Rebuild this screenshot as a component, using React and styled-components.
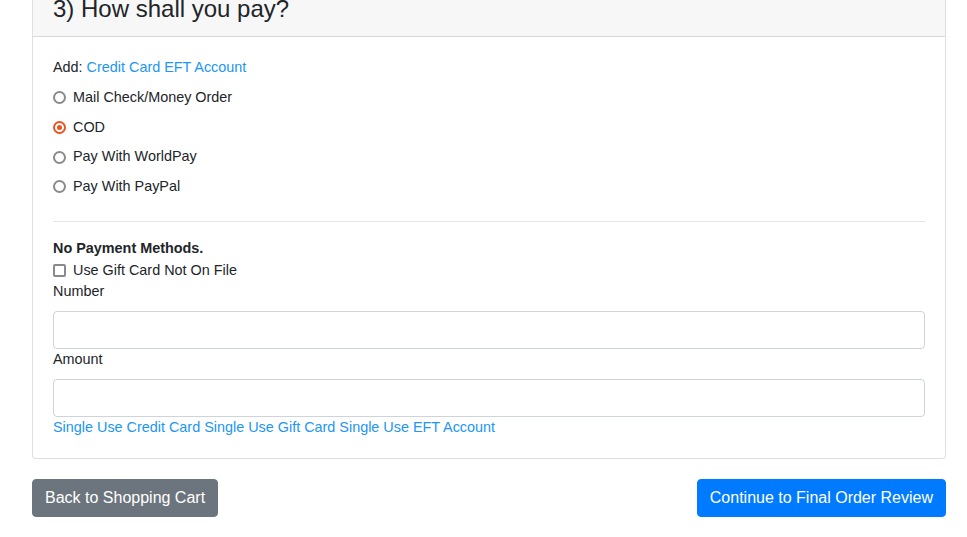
import React from 'react';
import styled, { createGlobalStyle } from 'styled-components';

const GlobalStyle = createGlobalStyle`
  * { box-sizing: border-box; }
  body {
    margin: 0;
    background: #fff;
    color: #212529;
    font-family: "Liberation Sans", Arial, sans-serif;
    font-size: 14.4px;
    line-height: 1.5;
  }
`;

const Page = styled.div`
  padding: 0 21px 20px 32px;
  margin-top: -18px;
`;

const Card = styled.div`
  border: 1px solid rgba(0, 0, 0, 0.125);
  border-radius: 4px;
  background: #fff;
`;

const CardHeader = styled.div`
  padding: 12px 20px;
  background: #f7f7f7;
  border-bottom: 1px solid rgba(0, 0, 0, 0.125);
`;

const Title = styled.h4`
  margin: 0;
  font-size: 24px;
  font-weight: 400;
  line-height: 1.2;
`;

const CardBody = styled.div`
  padding: 20px;
`;

const Link = styled.a`
  color: #2196f3;
  text-decoration: none;
  cursor: pointer;
`;

const AddLine = styled.div`
  height: 21.6px;
`;

const OptionList = styled.div`
  display: flex;
  flex-direction: column;
  gap: 8.1px;
  margin-top: 8.6px;
`;

const Option = styled.label`
  display: flex;
  align-items: center;
  gap: 7px;
  height: 21.6px;
  cursor: pointer;
`;

const Radio = styled.span`
  width: 13px;
  height: 13px;
  border-radius: 50%;
  border: 2px solid ${p => (p.checked ? '#e95420' : '#8a8a8e')};
  display: flex;
  align-items: center;
  justify-content: center;
  flex-shrink: 0;

  &::after {
    content: '';
    width: 5px;
    height: 5px;
    border-radius: 50%;
    background: ${p => (p.checked ? '#e95420' : 'transparent')};
  }
`;

const Check = styled.span`
  width: 13px;
  height: 13px;
  border: 2px solid #8a8a8e;
  border-radius: 2px;
  flex-shrink: 0;
`;

const Divider = styled.hr`
  border: 0;
  border-top: 1px solid rgba(0, 0, 0, 0.1);
  margin: 23px 0 16px;
`;

const Strong = styled.div`
  font-weight: 700;
  height: 21.6px;
  margin-bottom: 0.6px;
`;

const FieldLabel = styled.div`
  height: 21.6px;
  margin-bottom: 8px;
`;

const Input = styled.input`
  display: block;
  width: 100%;
  height: 38px;
  padding: 6px 12px;
  border: 1px solid #ced4da;
  border-radius: 4px;
  font: inherit;
  font-size: 16px;
  color: #495057;
  outline: none;
`;

const LinkRow = styled.div`
  display: flex;
  gap: 4px;
  height: 21.6px;
`;

const Actions = styled.div`
  display: flex;
  justify-content: space-between;
  margin-top: 20px;
`;

const Button = styled.button`
  height: 38px;
  padding: 0 12px;
  border: 1px solid ${p => (p.primary ? '#007bff' : '#6c757d')};
  background: ${p => (p.primary ? '#007bff' : '#6c757d')};
  color: #fff;
  border-radius: 4px;
  font-family: "Liberation Sans", Arial, sans-serif;
  font-size: 16px;
  line-height: 1.5;
  cursor: pointer;
`;

const methods = [
  { label: 'Mail Check/Money Order' },
  { label: 'COD', checked: true },
  { label: 'Pay With WorldPay' },
  { label: 'Pay With PayPal' },
];

const App = () => {
  return (
    <>
      <GlobalStyle />
      <Page>
        <Card>
          <CardHeader>
            <Title>3) How shall you pay?</Title>
          </CardHeader>
          <CardBody>
            <AddLine>
              Add: <Link>Credit Card</Link> <Link>EFT Account</Link>
            </AddLine>
            <OptionList>
              {methods.map(m => (
                <Option key={m.label}>
                  <Radio checked={m.checked} />
                  {m.label}
                </Option>
              ))}
            </OptionList>

            <Divider />

            <Strong>No Payment Methods.</Strong>
            <Option>
              <Check />
              Use Gift Card Not On File
            </Option>
            <FieldLabel>Number</FieldLabel>
            <Input type="text" />
            <FieldLabel>Amount</FieldLabel>
            <Input type="text" />
            <LinkRow>
              <Link>Single Use Credit Card</Link>
              <Link>Single Use Gift Card</Link>
              <Link>Single Use EFT Account</Link>
            </LinkRow>
          </CardBody>
        </Card>
        <Actions>
          <Button>Back to Shopping Cart</Button>
          <Button primary>Continue to Final Order Review</Button>
        </Actions>
      </Page>
    </>
  );
};

export default App;
